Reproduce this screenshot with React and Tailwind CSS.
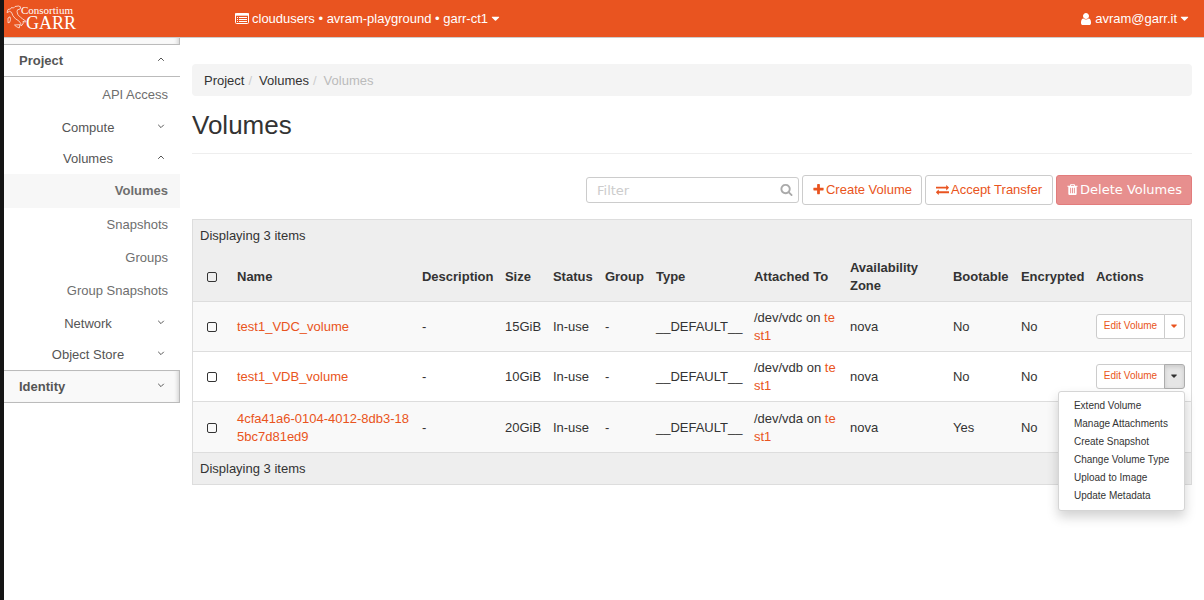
import React, { useState } from 'react';

const ICONS = {
    caret: 'M1408 704q0 26-19 45l-448 448q-19 19-45 19t-45-19l-448-448q-19-19-19-45t19-45 45-19h896q26 0 45 19t19 45z',
    plus: 'M1600 736v192q0 40-28 68t-68 28h-416v416q0 40-28 68t-68 28h-192q-40 0-68-28t-28-68v-416h-416q-40 0-68-28t-28-68v-192q0-40 28-68t68-28h416v-416q0-40 28-68t68-28h192q40 0 68 28t28 68v416h416q40 0 68 28t28 68z',
    search: 'M1216 832q0-185-131.5-316.5t-316.5-131.5-316.5 131.5-131.5 316.5 131.5 316.5 316.5 131.5 316.5-131.5 131.5-316.5zm512 832q0 52-38 90t-90 38q-54 0-90-38l-343-342q-179 124-399 124-143 0-273.5-55.5t-225-150-150-225-55.5-273.5 55.5-273.5 150-225 225-150 273.5-55.5 273.5 55.5 225 150 150 225 55.5 273.5q0 220-124 399l343 343q37 37 37 90z',
    trash: 'M704 1376v-704q0-14-9-23t-23-9h-64q-14 0-23 9t-9 23v704q0 14 9 23t23 9h64q14 0 23-9t9-23zm256 0v-704q0-14-9-23t-23-9h-64q-14 0-23 9t-9 23v704q0 14 9 23t23 9h64q14 0 23-9t9-23zm256 0v-704q0-14-9-23t-23-9h-64q-14 0-23 9t-9 23v704q0 14 9 23t23 9h64q14 0 23-9t9-23zm-544-992h448l-48-117q-7-9-17-11h-317q-10 2-17 11zm928 32v64q0 14-9 23t-23 9h-96v948q0 83-47 143.5t-113 60.5h-832q-66 0-113-58.5t-47-141.5v-952h-96q-14 0-23-9t-9-23v-64q0-14 9-23t23-9h309l70-167q15-37 54-63t79-26h320q40 0 79 26t54 63l70 167h309q14 0 23 9t9 23z',
    exchange: 'M1792 1184v192q0 13-9.5 22.5t-22.5 9.5h-1376v192q0 13-9.5 22.5t-22.5 9.5q-12 0-24-10l-319-320q-9-9-9-22 0-14 9-23l320-320q9-9 23-9 13 0 22.5 9.5t9.5 22.5v192h1376q13 0 22.5 9.5t9.5 22.5zm0-544q0 14-9 23l-320 320q-9 9-23 9-13 0-22.5-9.5t-9.5-22.5v-192h-1376q-13 0-22.5-9.5t-9.5-22.5v-192q0-13 9.5-22.5t22.5-9.5h1376v-192q0-14 9-23t23-9q12 0 24 10l319 319q9 9 9 23z',
    user: 'M1536 1399q0 109-62.5 187t-150.5 78h-854q-88 0-150.5-78t-62.5-187q0-85 8.5-160.5t31.5-152 58.5-131 94-89 134.5-34.5q131 128 313 128t313-128q76 0 134.5 34.5t94 89 58.5 131 31.5 152 8.5 160.5zm-256-887q0 159-112.5 271.5t-271.5 112.5-271.5-112.5-112.5-271.5 112.5-271.5 271.5-112.5 271.5 112.5 112.5 271.5z',
};

const Icon = ({ name, className }) => (
    <svg viewBox="0 0 1792 1792" fill="currentColor" className={className} aria-hidden="true">
        <path d={ICONS[name]} />
    </svg>
);

const ListIcon = () => (
    <svg viewBox="0 0 14 12" className="w-3.5 h-3" fill="none" stroke="currentColor" aria-hidden="true">
        <rect x="0.5" y="0.5" width="13" height="10" rx="1" />
        <path d="M0 1.5h14" strokeWidth="2.4" />
        <path d="M2 4.500h1M4 4.500h8M2 6.500h1M4 6.500h8M2 8.500h1M4 8.500h8" strokeWidth="1.200" />
    </svg>
);

const Chevron = ({ up }) => (
    <svg viewBox="0 0 8 8" className="w-2 h-2 mb-1" fill="none" stroke="currentColor" aria-hidden="true">
        <path d={up ? 'M1.2 5.8 4 3l2.8 2.8' : 'M1.2 2.8 4 5.6l2.8-2.8'} />
    </svg>
);

const Logo = () => (
    <svg viewBox="0 0 78 28" className="w-[78px] h-7" aria-label="Consortium GARR">
        <g fill="none" stroke="#fff" strokeWidth="0.8" strokeLinejoin="round" opacity="0.9">
            <path d="M1 7.500 2 4.500l2.500-.5 1-1.500 2 .5 1.500-1.500 3.500-.5 2 .8-.3 2.200-2.700.8-.5 2 1 3 2.500 2.500 2 1.500 3.500 2.500-.5.8-2.500-.8.3 1.800-1.300 2.200-1 .5-.3-2.500-2-2.500-3.200-2-2.500-3-1.500-3.500-2-1-2 1.200z" />
            <path d="m8.500 20 5.500-.3-.8 3.300-3-1.500z" />
            <path d="m2 13 2-1.200.5 2.700-.8 2.800-1.700.5z" />
        </g>
        <g fill="#fff" fontFamily="'Liberation Serif', serif">
            <text x="15" y="9" fontSize="11">Consortium</text>
            <text x="20" y="24" fontSize="18">GARR</text>
        </g>
    </svg>
);

const volumes = [
    { name: 'test1_VDC_volume', size: '15GiB', device: '/dev/vdc', bootable: 'No' },
    { name: 'test1_VDB_volume', size: '10GiB', device: '/dev/vdb', bootable: 'No' },
    { name: '4cfa41a6-0104-4012-8db3-185bc7d81ed9', size: '20GiB', device: '/dev/vda', bootable: 'Yes' },
];

const menuItems = ['Extend Volume', 'Manage Attachments', 'Create Snapshot', 'Change Volume Type', 'Upload to Image', 'Update Metadata'];

const columns = [
    ['Name', 'w-auto'],
    ['Description', 'w-[83px]'],
    ['Size', 'w-12'],
    ['Status', 'w-[52px]'],
    ['Group', 'w-[51px]'],
    ['Type', 'w-[98px]'],
    ['Attached To', 'w-24'],
    ['Availability Zone', 'w-[103px]'],
    ['Bootable', 'w-[68px]'],
    ['Encrypted', 'w-[75px]'],
    ['Actions', 'w-[102px]'],
];

const Section = ({ label, open }) => (
    <button className="flex w-full h-[31px] items-center px-[15px] text-[#555]">
        <span className="flex-1 text-center">{label}</span>
        <Chevron up={open} />
    </button>
);

const SubLink = ({ label, active }) => (
    <a
        href="#"
        className={active
            ? 'flex h-[34px] items-center justify-end px-3 font-bold bg-[#f7f7f7] text-[#6e6e6e]'
            : 'flex h-[33px] items-center justify-end px-3 text-[#6e6e6e]'}
    >
        {label}
    </a>
);

const Sidebar = () => (
    <nav className="w-44 shrink-0">
        <div className="h-1.5 bg-[#f9f9f9] border-r border-[#bbb] shadow-[inset_-4px_0_4px_-3px_#ccc]" />
        <button className="flex w-full h-[33px] items-center px-[15px] border-y border-[#bbb] font-bold text-[#555]">
            <span className="flex-1 text-left">Project</span>
            <Chevron up />
        </button>
        <div className="py-px">
            <SubLink label="API Access" />
        </div>
        <Section label="Compute" />
        <Section label="Volumes" open />
        <div className="pb-px">
            <SubLink label="Volumes" active />
            <SubLink label="Snapshots" />
            <SubLink label="Groups" />
            <SubLink label="Group Snapshots" />
        </div>
        <Section label="Network" />
        <Section label="Object Store" />
        <button className="flex w-full h-[33px] items-center pl-[15px] pr-3.5 border-y border-r border-[#bbb] bg-[#f9f9f9] shadow-[inset_-4px_0_4px_-3px_#ccc] font-bold text-[#555]">
            <span className="flex-1 text-left">Identity</span>
            <Chevron />
        </button>
    </nav>
);

const RowActions = ({ open, onToggle }) => (
    <div className="relative flex h-[25px] w-[89px] text-[10px]">
        <button className="flex-1 bg-white border border-[#ccc] rounded-l-[3px] text-[#e95420] whitespace-nowrap">Edit Volume</button>
        <button
            onClick={onToggle}
            aria-label="More actions"
            aria-expanded={open}
            className={open
                ? 'flex w-[21px] -ml-px items-center justify-center border border-[#adadad] rounded-r-[3px] bg-[#e6e6e6] text-[#333] shadow-[inset_0_2px_4px_rgba(0,0,0,0.12)]'
                : 'flex w-[21px] -ml-px items-center justify-center border border-[#ccc] rounded-r-[3px] bg-white text-[#e95420]'}
        >
            <Icon name="caret" className="w-2.5 h-2.5" />
        </button>
        {open && (
            <ul className="absolute right-0 top-full mt-0.5 z-10 w-[127px] py-[5px] bg-white border border-[#d5d5d5] rounded-[3px] shadow-[0_6px_12px_rgba(0,0,0,0.18)]">
                {menuItems.map(item => (
                    <li key={item}>
                        <a href="#" className="block px-[15px] leading-[18px] text-[#333] whitespace-nowrap">{item}</a>
                    </li>
                ))}
            </ul>
        )}
    </div>
);

const Checkbox = ({ label }) => (
    <input type="checkbox" aria-label={label} className="block mx-auto size-2.5 appearance-none border border-[#333] rounded-[2px] checked:bg-[#333]" />
);

const VolumesTable = () => {
    const [openRow, setOpenRow] = useState(1);

    return (
        <div className="mt-3.5 border border-[#ddd]">
            <table className="w-full table-fixed border-collapse text-left leading-[18px]">
                <colgroup>
                    <col className="w-[37px]" />
                    {columns.map(([label, width]) => <col key={label} className={width} />)}
                </colgroup>
                <thead className="bg-[#eee]">
                    <tr className="h-8">
                        <th colSpan={12} className="px-[7px] font-normal">Displaying 3 items</th>
                    </tr>
                    <tr className="h-[49px]">
                        <th className="pt-0.5"><Checkbox label="Select all" /></th>
                        {columns.map(([label]) => <th key={label} className="px-[7px] pt-0.5 font-bold">{label}</th>)}
                    </tr>
                </thead>
                <tbody>
                    {volumes.map((v, i) => (
                        <tr key={v.name} className="h-[50px] last:h-[51px] border-t border-[#ddd] odd:bg-[#f9f9f9]">
                            <td className="pt-0.5"><Checkbox label={v.name} /></td>
                            <td className="pl-[7px] pr-1 pt-0.5 break-all"><a href="#" className="text-[#e95420]">{v.name}</a></td>
                            <td className="px-[7px] pt-0.5">-</td>
                            <td className="px-[7px] pt-0.5">{v.size}</td>
                            <td className="px-[7px] pt-0.5">In-use</td>
                            <td className="px-[7px] pt-0.5">-</td>
                            <td className="px-[7px] pt-0.5">__DEFAULT__</td>
                            <td className="px-[7px] pt-0.5 break-all">{v.device} on <a href="#" className="text-[#e95420]">test1</a></td>
                            <td className="px-[7px] pt-0.5">nova</td>
                            <td className="px-[7px] pt-0.5">{v.bootable}</td>
                            <td className="px-[7px] pt-0.5">No</td>
                            <td className="pl-[7px] pr-1.5">
                                <RowActions open={openRow === i} onToggle={() => setOpenRow(openRow === i ? null : i)} />
                            </td>
                        </tr>
                    ))}
                </tbody>
                <tfoot className="bg-[#eee]">
                    <tr className="h-8 border-t border-[#ddd]">
                        <td colSpan={12} className="px-[7px] pt-0.5">Displaying 3 items</td>
                    </tr>
                </tfoot>
            </table>
        </div>
    );
};

const App = () => {
    return (
        <div className="min-h-screen bg-white border-l-4 border-[#151515] font-['Liberation_Sans',sans-serif] text-[13px] leading-[18px] text-[#333]">
            <header className="flex h-[38px] items-center justify-between bg-[#e95420] border-b border-[#ccc] pr-[15px] text-white">
                <div className="flex items-center">
                    <a href="#" className="w-[231px] pl-0.5"><Logo /></a>
                    <button className="flex items-center gap-[3px]">
                        <ListIcon />
                        <span>cloudusers • avram-playground • garr-ct1</span>
                        <Icon name="caret" className="w-[13px] h-[13px] -mx-0.5" />
                    </button>
                </div>
                <button className="flex items-center gap-[3px]">
                    <Icon name="user" className="w-3.5 h-3.5 -mr-px" />
                    <span>avram@garr.it</span>
                    <Icon name="caret" className="w-[13px] h-[13px] -mx-0.5" />
                </button>
            </header>

            <div className="flex">
                <Sidebar />
                <main className="flex-1 min-w-0 px-3 pt-[26px]">
                    <nav className="flex h-8 items-center px-3 pt-0.5 rounded bg-[#f4f4f4]" aria-label="Breadcrumb">
                        <a href="#">Project</a>
                        <span className="pl-1 pr-[7px] text-[#ccc]">/</span>
                        <a href="#">Volumes</a>
                        <span className="pl-1 pr-[7px] text-[#ccc]">/</span>
                        <span className="text-[#bbb]">Volumes</span>
                    </nav>
                    <h1 className="mt-[15px] pb-[13px] border-b border-[#eee] text-[26px] leading-[29px]">Volumes</h1>

                    <div className="mt-[21px] flex items-center justify-end gap-[3px]">
                        <div className="relative w-[213px]">
                            <input
                                type="text"
                                placeholder="Filter"
                                aria-label="Filter"
                                className="block w-full h-[26px] pl-2.5 pr-7 border border-[#ccc] rounded-[3px] font-['DejaVu_Sans',sans-serif] placeholder:text-[#ccc] outline-none"
                            />
                            <Icon name="search" className="absolute right-1.5 top-1.5 w-[13px] h-[13px] text-[#aaa]" />
                        </div>
                        <button className="flex h-[30px] items-center gap-0.5 px-[9px] border border-[#ccc] rounded-[3px] text-[#e95420]">
                            <Icon name="plus" className="w-[13px] h-[13px] -mr-px mb-0.5" />
                            Create Volume
                        </button>
                        <button className="flex h-[30px] items-center gap-0.5 px-2.5 border border-[#ccc] rounded-[3px] text-[#e95420]">
                            <Icon name="exchange" className="w-[13px] h-[13px] mb-0.5" />
                            Accept Transfer
                        </button>
                        <button disabled className="flex h-[30px] items-center gap-0.5 px-[9px] border border-[#e27c7c] rounded-[3px] bg-[#e78f8e] text-white font-['DejaVu_Sans',sans-serif]">
                            <Icon name="trash" className="w-[13px] h-[13px] -mr-px mb-0.5" />
                            Delete Volumes
                        </button>
                    </div>

                    <VolumesTable />
                </main>
            </div>
        </div>
    );
};

export default App;
